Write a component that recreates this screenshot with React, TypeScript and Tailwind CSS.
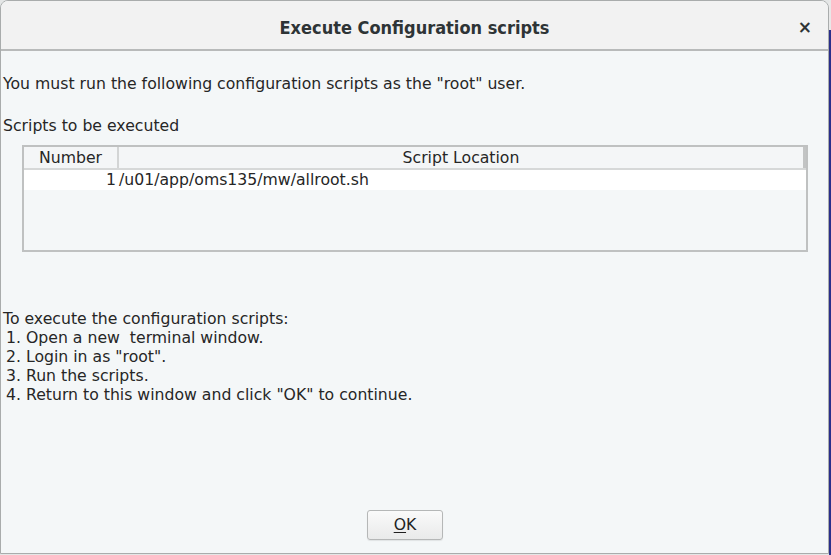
import React from 'react';

const steps = [
  '1. Open a new \u00a0terminal window.',
  '2. Login in as "root".',
  '3. Run the scripts.',
  '4. Return to this window and click "OK" to continue.',
];

export default function App() {
  return (
    <div className="flex h-[555px] w-[831px] bg-[#e4e6e6]">
      <div className="flex h-[554px] w-[829px] flex-col overflow-hidden rounded-t-[8px] border border-[#a9acac] bg-[#f4f7f8] font-['DejaVu_Sans',sans-serif] text-[15.7px] text-[#262626]">
        {/* Title bar */}
        <div className="relative flex h-[50px] shrink-0 items-center justify-center border-b-2 border-[#b8baba] bg-[#f2f2f2] pt-[4px]">
          <span className="font-['DejaVu_Sans_Condensed',sans-serif] text-[18px] font-bold text-[#2e3436]">
            Execute Configuration scripts
          </span>
          <span className="absolute right-[16px] top-[14px] font-['DejaVu_Sans',sans-serif] text-[17px] font-bold text-[#2e3436]">
            ×
          </span>
        </div>

        {/* Body */}
        <div className="flex flex-1 flex-col px-[2px]">
          <p className="mt-[23px] leading-[19px]">
            You must run the following configuration scripts as the "root" user.
          </p>
          <p className="mt-[23px] leading-[19px]">Scripts to be executed</p>

          {/* Table */}
          <div className="ml-[19px] mr-[18px] mt-[10px] h-[107px] border-2 border-[#bfc1c1] bg-[#f4f7f8]">
            <div className="flex h-[23px] border-b-2 border-[#d6d8d8] bg-[#f4f6f7]">
              <div className="flex w-[95px] items-center justify-center border-r-2 border-[#d3d5d5]">Number</div>
              <div className="flex flex-1 items-center justify-center border-r-[3px] border-[#c2c4c4]">
                Script Location
              </div>
            </div>
            <div className="flex h-[20px] items-center bg-white">
              <div className="w-[92px] text-right">1</div>
              <div className="pl-[3px]">/u01/app/oms135/mw/allroot.sh</div>
            </div>
          </div>

          {/* Instructions */}
          <div className="mt-[57px] leading-[19px]">
            <p>To execute the configuration scripts:</p>
            {steps.map((s) => (
              <p key={s} className="pl-[3px]">
                {s}
              </p>
            ))}
          </div>

          <div className="mt-auto flex justify-center pb-[13px] pr-[19px]">
            <button className="flex h-[30px] w-[76px] items-center justify-center rounded-[3px] border border-[#b5b7b7] bg-gradient-to-b from-[#fafafa] to-[#e9eaea] text-[#1f1f1f] shadow-[0_1px_1px_rgba(0,0,0,0.08)]">
              <span>
                <span className="underline underline-offset-2">O</span>K
              </span>
            </button>
          </div>
        </div>
      </div>
      {/* desktop edge behind the window */}
      <div className="flex w-[2px] flex-col">
        <div className="h-[30px] bg-[#e8e8e8]" />
        <div className="flex-1 bg-[#2a2f8a]" />
      </div>
    </div>
  );
}
